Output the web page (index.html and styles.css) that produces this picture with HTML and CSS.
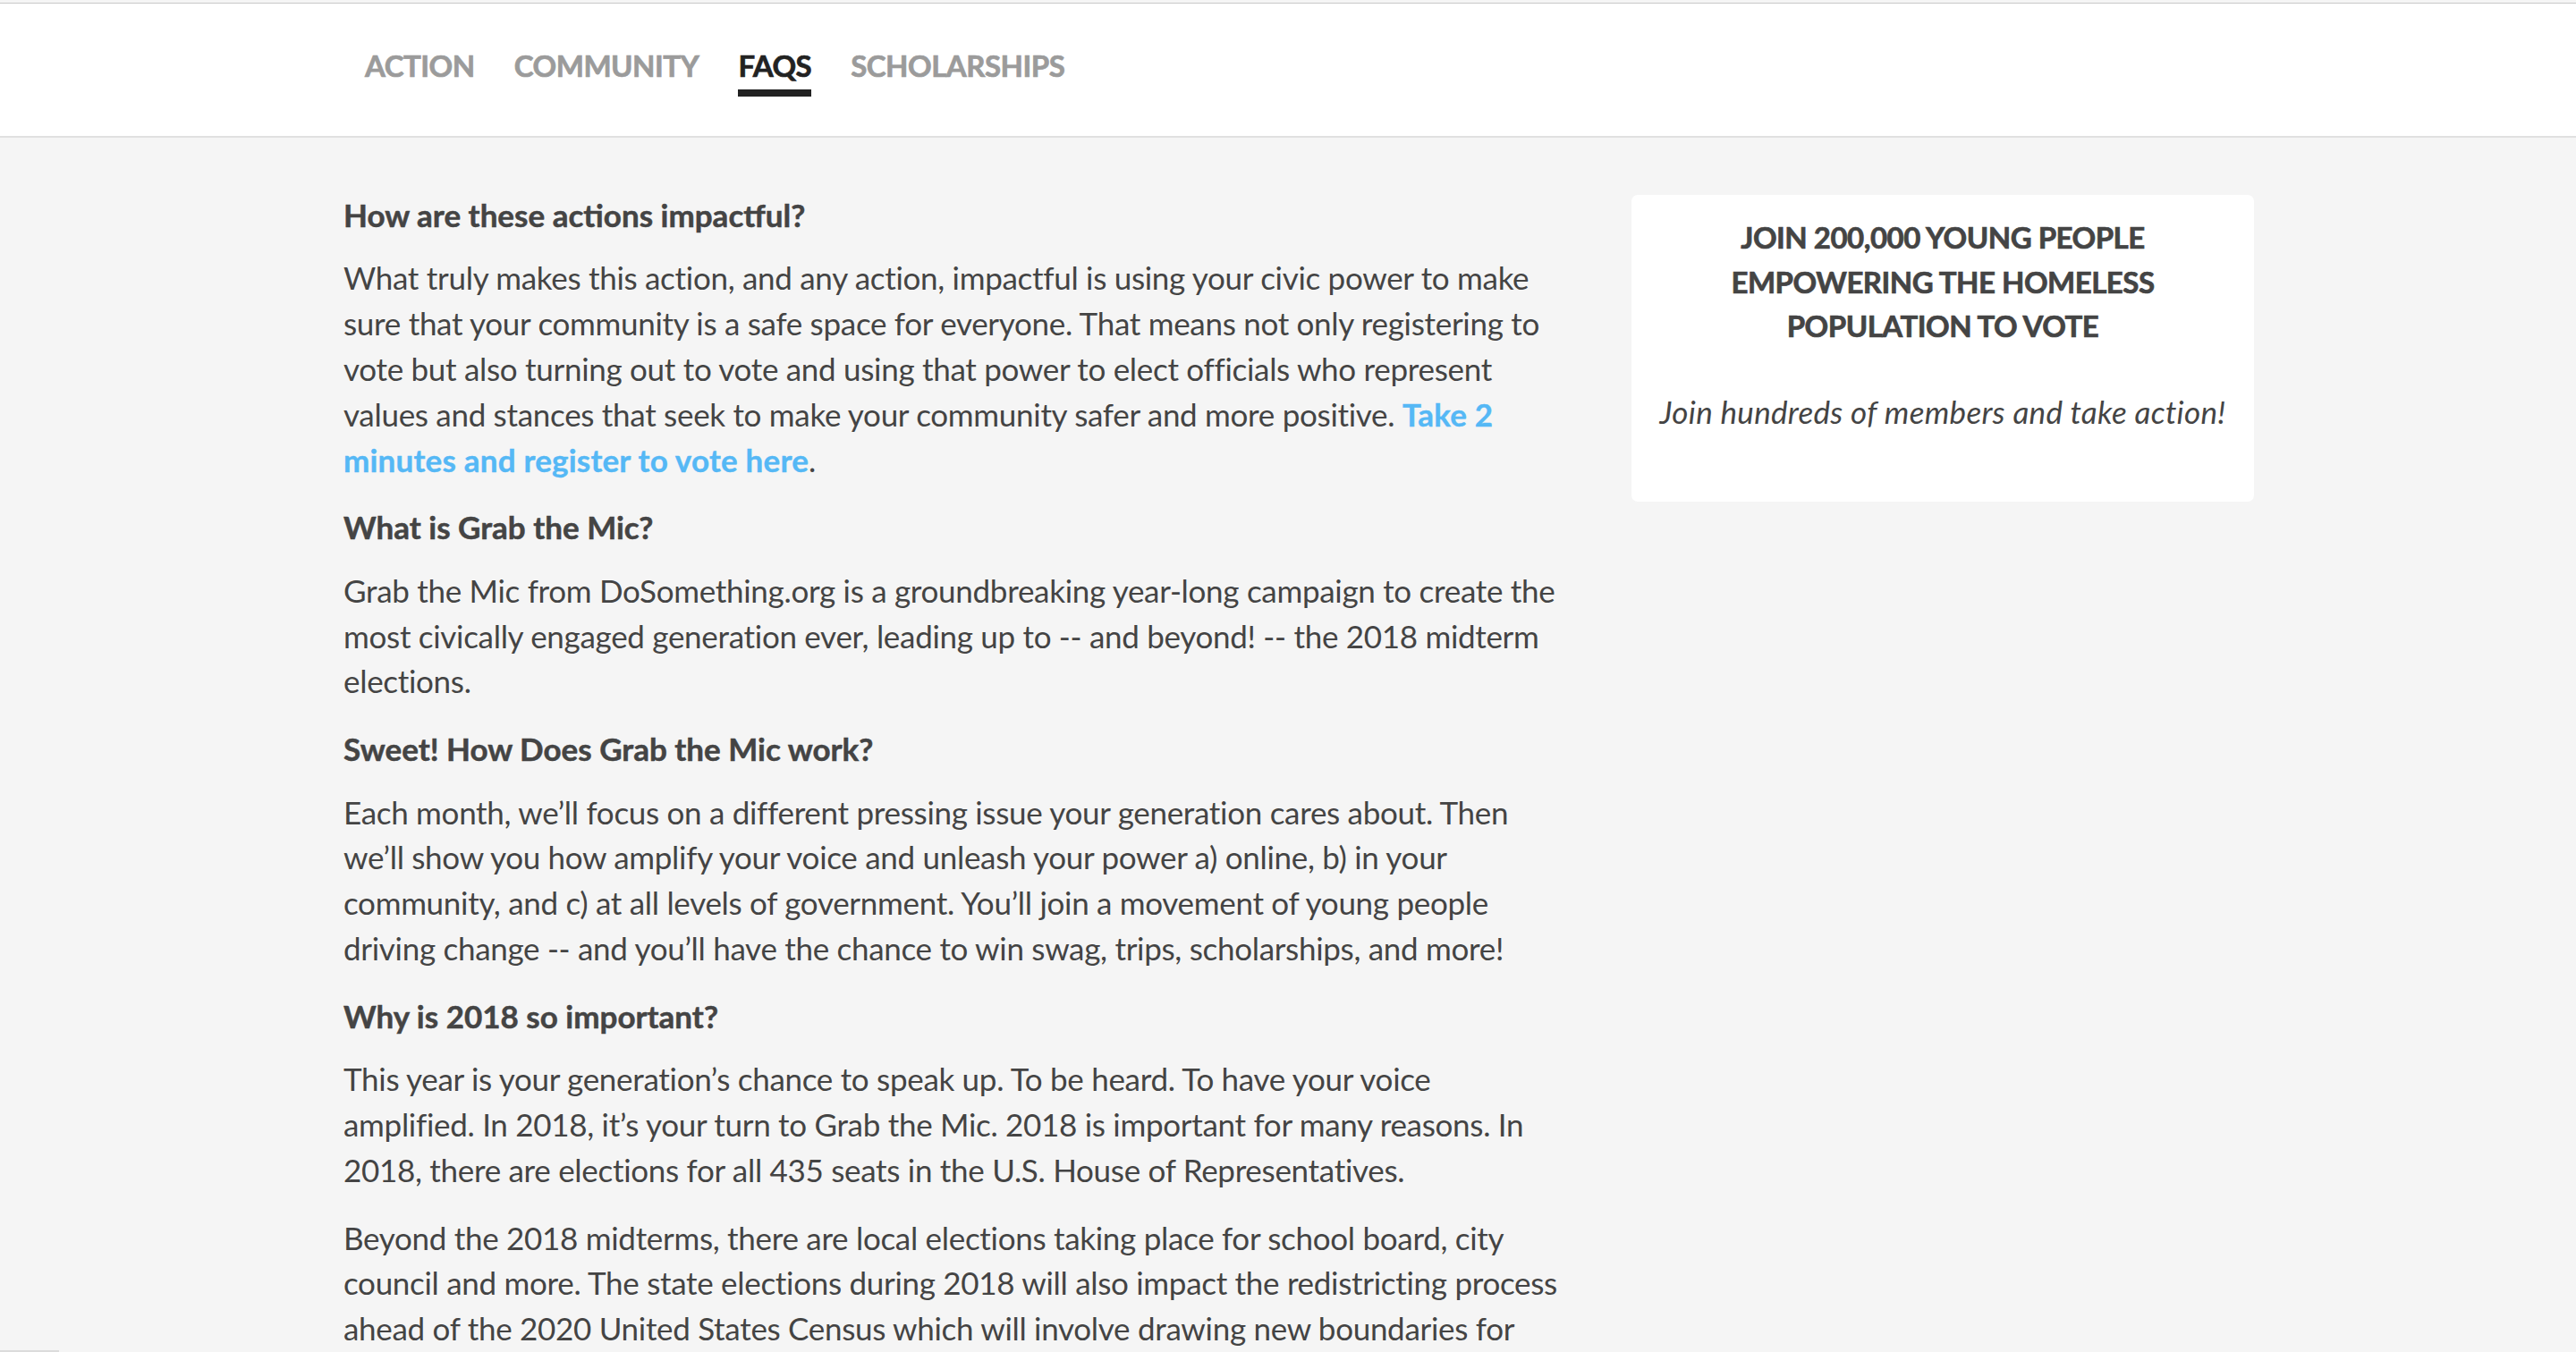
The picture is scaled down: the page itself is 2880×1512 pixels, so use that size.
FILE: index.html
```html
<!DOCTYPE html>
<html lang="en">
<head>
<meta charset="utf-8">
<title>Grab the Mic – FAQs</title>
<link rel="stylesheet" href="styles.css">
</head>
<body>
<header class="site-header">
  <nav class="tabs">
    <a class="tab" href="#">Action</a>
    <a class="tab" href="#">Community</a>
    <a class="tab is-active" href="#">FAQs</a>
    <a class="tab" href="#">Scholarships</a>
  </nav>
</header>

<div class="page">
  <main class="faq">
    <h3 class="faq-q">How are these actions impactful?</h3>
    <p class="faq-a">What truly makes this action, and any action, impactful is using your civic power to make sure that your community is a safe space for everyone. That means not only registering to vote but also turning out to vote and using that power to elect officials who represent values and stances that seek to make your community safer and more positive. <a class="link" href="#">Take 2 minutes and register to vote here</a>.</p>

    <h3 class="faq-q">What is Grab the Mic?</h3>
    <p class="faq-a">Grab the Mic from DoSomething.org is a groundbreaking year-long campaign to create the most civically engaged generation ever, leading up to -- and beyond! -- the 2018 midterm elections.</p>

    <h3 class="faq-q">Sweet! How Does Grab the Mic work?</h3>
    <p class="faq-a">Each month, we’ll focus on a different pressing issue your generation cares about. Then we’ll show you how amplify your voice and unleash your power a) online, b) in your community, and c) at all levels of government. You’ll join a movement of young people driving change -- and you’ll have the chance to win swag, trips, scholarships, and more!</p>

    <h3 class="faq-q">Why is 2018 so important?</h3>
    <p class="faq-a">This year is your generation’s chance to speak up. To be heard. To have your voice amplified. In 2018, it’s your turn to Grab the Mic. 2018 is important for many reasons. In 2018, there are elections for all 435 seats in the U.S. House of Representatives.</p>
    <p class="faq-a">Beyond the 2018 midterms, there are local elections taking place for school board, city council and more. The state elections during 2018 will also impact the redistricting process ahead of the 2020 United States Census which will involve drawing new boundaries for congressional and state legislative districts.</p>
  </main>

  <aside class="side">
    <div class="card">
      <h2 class="card-title">Join 200,000 young people empowering the homeless population to vote</h2>
      <p class="card-sub">Join hundreds of members and take action!</p>
    </div>
  </aside>
</div>

<div class="scroll-stub"></div>
</body>
</html>
```
FILE: styles.css
```css
html, body {
  margin: 0;
  padding: 0;
}

body {
  background: #f5f5f5;
  color: #444444;
  font-family: Lato, "Open Sans", "Liberation Sans", sans-serif;
  padding-top: 3px;
}

/* ---------- header / tabs ---------- */
.site-header {
  background: #ffffff;
  border-top: 1px solid #c8c8c8;
  border-bottom: 2px solid #e0e0e0;
  height: 151px;
  box-sizing: border-box;
}

.tabs {
  width: 2160px;
  margin: 0 auto;
  padding: 49px 0 0 48px;
  box-sizing: border-box;
  display: flex;
  gap: 44px;
}

.tab {
  display: block;
  color: #9b9b9b;
  font-weight: 700;
  font-size: 33px;
  line-height: 40px;
  letter-spacing: -0.5px;
  text-transform: uppercase;
  text-decoration: none;
  -webkit-text-stroke: 0.7px currentColor;
}

.tab::after {
  content: "";
  display: block;
  height: 8px;
  margin-top: 7px;
  background: transparent;
}

.tab.is-active {
  color: #222222;
}

.tab.is-active::after {
  background: #222222;
}

/* ---------- page layout ---------- */
.page {
  width: 2160px;
  margin: 0 auto;
  display: grid;
  grid-template-columns: 1440px 720px;
}

.faq {
  padding: 57px 51px 0 24px;
}

.faq-q {
  margin: 4px 0 20px;
  font-size: 35px;
  line-height: 50.4px;
  font-weight: 700;
  color: #444444;
  -webkit-text-stroke: 0.5px currentColor;
}

.faq-a {
  margin: 0 0 25px;
  font-size: 35px;
  line-height: 50.8px;
  letter-spacing: -0.3px;
}

.link {
  color: #55b8f5;
  font-weight: 700;
  text-decoration: none;
  letter-spacing: 0.2px;
  -webkit-text-stroke: 0.4px currentColor;
}

/* ---------- sidebar card ---------- */
.side {
  padding: 64px 0 0 24px;
}

.card {
  background: #ffffff;
  border-radius: 7px;
  padding: 23px 30px 76px;
  text-align: center;
}

.card-title {
  margin: 0;
  font-size: 33px;
  line-height: 49.6px;
  font-weight: 700;
  text-transform: uppercase;
  letter-spacing: -0.5px;
  color: #444444;
  -webkit-text-stroke: 0.7px currentColor;
}

.card-sub {
  margin: 45px 0 0;
  font-size: 35px;
  line-height: 50px;
  font-style: italic;
  letter-spacing: 0.3px;
}

/* ---------- bottom-left scroll stub ---------- */
.scroll-stub {
  position: fixed;
  left: 0;
  bottom: 0;
  width: 66px;
  height: 2px;
  background: #dcdcdc;
}
```
